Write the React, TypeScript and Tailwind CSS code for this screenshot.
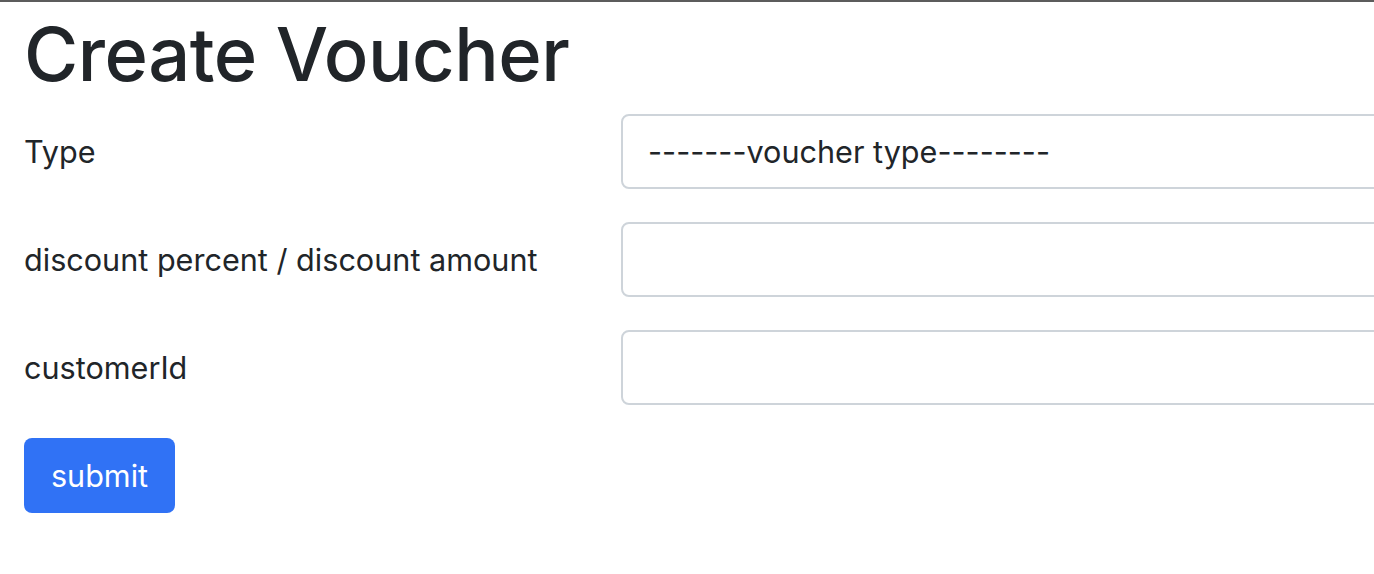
import React from "react";

export default function App() {
  const font = { fontFamily: "Inter, 'Noto Sans', sans-serif" };
  return (
    <div className="w-[1374px] h-[574px] overflow-hidden bg-white text-[#212529]" style={font}>
      <div className="h-[2px] bg-[#5c5c5c]" />
      <div className="pl-[24px]">
        <h1 className="text-[74px] leading-[92px] font-medium tracking-[-0.5px] mt-[6px] mb-[14px]">Create Voucher</h1>
        <div className="flex flex-col gap-[33px]">
          <div className="flex items-center">
            <label className="w-[597px] shrink-0 text-[30.6px]">Type</label>
            <div className="w-[900px] shrink-0 h-[75px] border-2 border-[#ced4da] rounded-[8px] flex items-center pl-[25px] text-[30.6px]">
              -------voucher type--------
            </div>
          </div>
          <div className="flex items-center">
            <label className="w-[597px] shrink-0 text-[30.6px]">discount percent / discount amount</label>
            <div className="w-[900px] shrink-0 h-[75px] border-2 border-[#ced4da] rounded-[8px]" />
          </div>
          <div className="flex items-center">
            <label className="w-[597px] shrink-0 text-[30.6px]">customerId</label>
            <div className="w-[900px] shrink-0 h-[75px] border-2 border-[#ced4da] rounded-[8px]" />
          </div>
          <div>
            <button className="w-[151px] h-[75px] bg-[#3072f5] text-white rounded-[8px] text-[30.6px]">submit</button>
          </div>
        </div>
      </div>
    </div>
  );
}
